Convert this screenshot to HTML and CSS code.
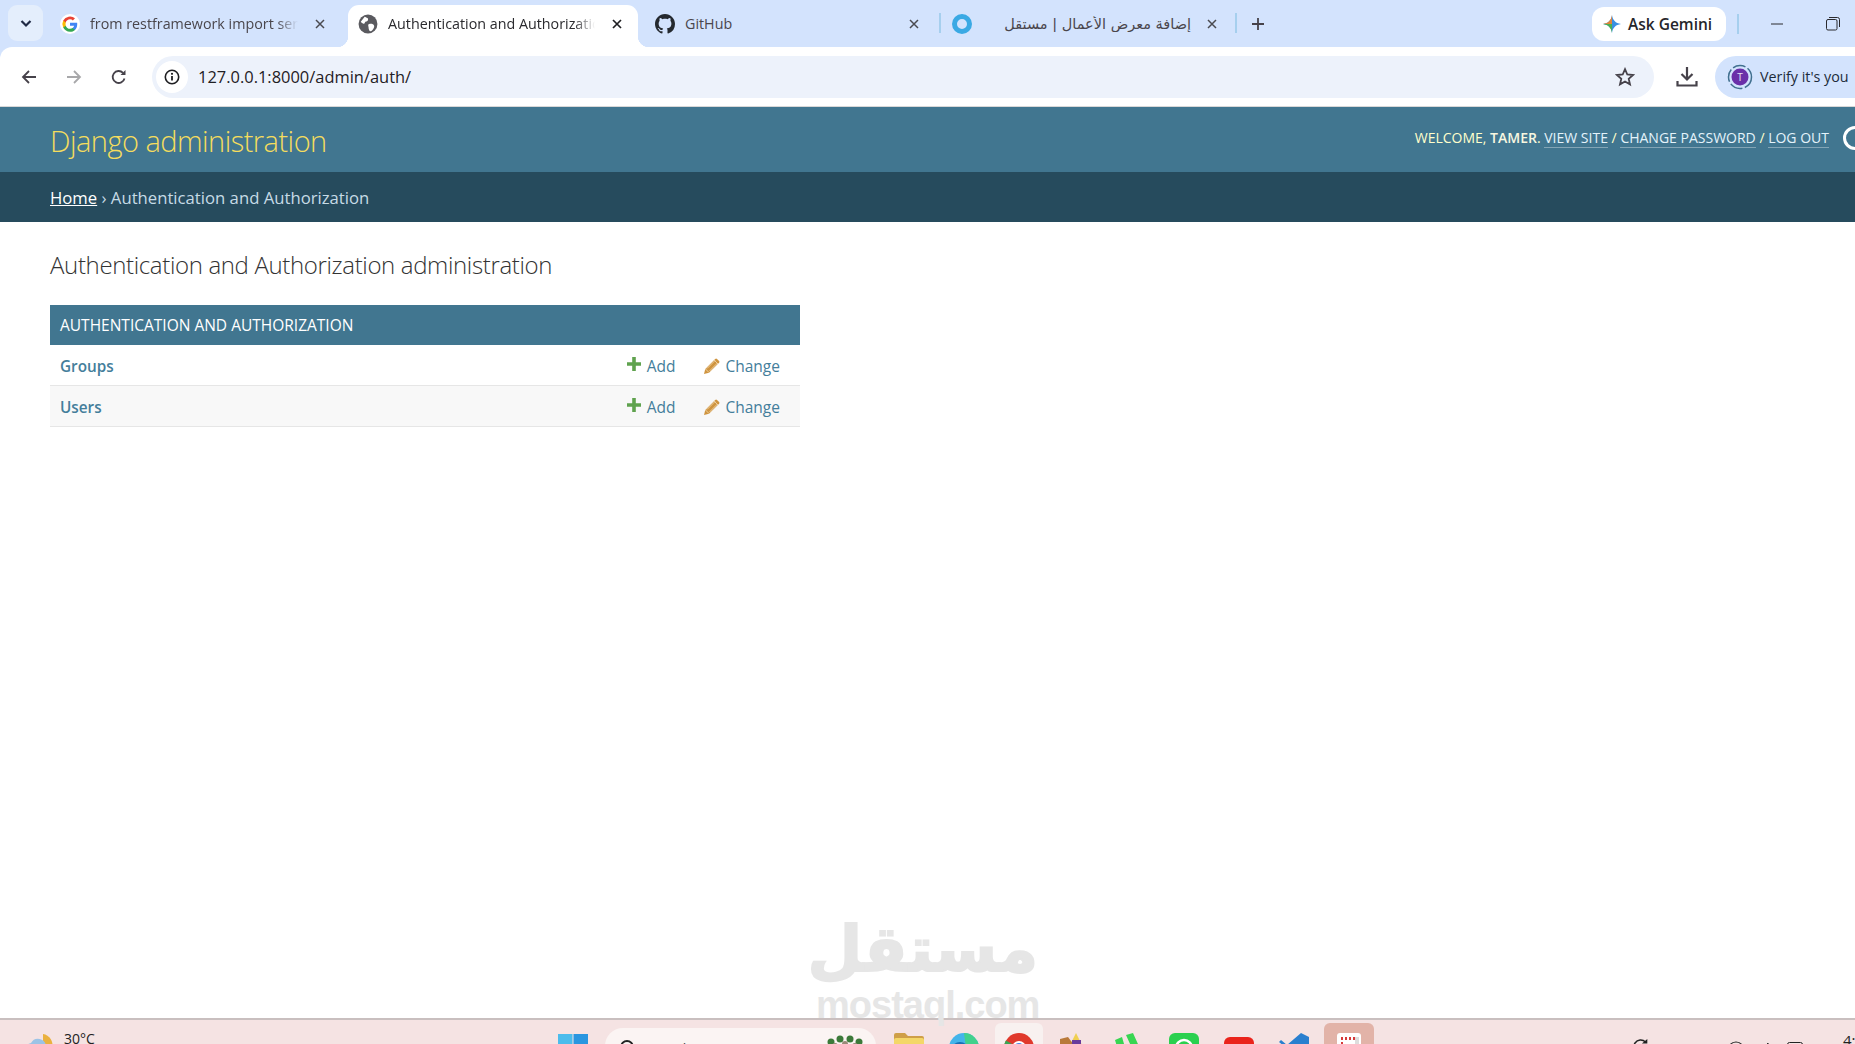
FILE: index.html
```html
<!DOCTYPE html>
<html lang="en">
<head>
<meta charset="utf-8">
<title>Authentication and Authorization</title>
<link rel="stylesheet" href="styles.css">
</head>
<body>
<div class="screen">
  <div class="tabstrip">
    <div class="tab-search"><svg width="14" height="14" viewBox="0 0 14 14"><path d="M2.500 5l4.500 4.500L11.500 5" fill="none" stroke="#1f2a44" stroke-width="2.200"/></svg></div>
    <div class="tab tab-1">
      <svg class="favicon" width="20" height="20" viewBox="0 0 18 18"><circle cx="9" cy="9" r="9" fill="#fff"/><path d="M15.500 9.200c0-.5 0-1-.1-1.400H9v2.700h3.700a3.200 3.200 0 0 1-1.400 2.100v1.700h2.200c1.300-1.200 2-3 2-5.100z" fill="#4285f4"/><path d="M9 16c1.800 0 3.400-.6 4.500-1.700l-2.200-1.700c-.6.4-1.400.7-2.300.7-1.800 0-3.300-1.200-3.800-2.800H2.900v1.700A7 7 0 0 0 9 16z" fill="#34a853"/><path d="M5.200 10.500a4.200 4.200 0 0 1 0-2.900V5.900H2.900a7 7 0 0 0 0 6.300z" fill="#fbbc05"/><path d="M9 4.800c1 0 1.900.3 2.600 1l1.900-1.900A7 7 0 0 0 2.900 5.900l2.300 1.700C5.700 6 7.200 4.800 9 4.800z" fill="#ea4335"/></svg>
      <span class="tab-title">from restframework import serializers</span>
      <svg class="tab-x" width="12" height="12" viewBox="0 0 12 12"><path d="M2 2l8 8M10 2l-8 8" stroke="#4a4a50" stroke-width="1.500"/></svg>
    </div>
    <div class="tab tab-active">
      <svg class="favicon" width="20" height="20" viewBox="0 0 18 18"><circle cx="9" cy="9" r="8.500" fill="#5a5a5f"/><path d="M6 2.500c2 1 3.500 1 3 3-.3 1.500-2.500 1-3 2.500s-2.500.5-3.500-1M10 9c2-.5 4 0 4.500 1.500S13 15 11.500 15.500 9.500 13 9.500 12 8.500 9.500 10 9z" fill="#fff"/></svg>
      <span class="tab-title">Authentication and Authorization</span>
      <svg class="tab-x" width="12" height="12" viewBox="0 0 12 12"><path d="M2 2l8 8M10 2l-8 8" stroke="#1f1f22" stroke-width="1.700"/></svg>
    </div>
    <div class="tab tab-3">
      <svg class="favicon" width="20" height="20" viewBox="0 0 16 16"><path fill="#24292f" d="M8 0C3.580 0 0 3.580 0 8c0 3.540 2.290 6.530 5.470 7.590.4.070.55-.17.55-.38 0-.19-.01-.82-.01-1.490-2.010.37-2.530-.49-2.690-.94-.09-.23-.48-.94-.82-1.130-.28-.15-.68-.52-.01-.53.630-.01 1.080.58 1.230.82.720 1.210 1.870.87 2.330.66.070-.52.280-.87.510-1.070-1.780-.2-3.640-.89-3.640-3.950 0-.87.310-1.590.820-2.150-.08-.2-.36-1.020.08-2.120 0 0 .67-.21 2.200.82.640-.18 1.320-.27 2-.27s1.360.09 2 .27c1.530-1.040 2.200-.82 2.200-.82.440 1.100.160 1.920.08 2.120.510.560.820 1.270.820 2.150 0 3.070-1.870 3.750-3.650 3.950.290.250.540.730.540 1.480 0 1.070-.01 1.930-.01 2.200 0 .210.150.460.550.380A8 8 0 0 0 16 8c0-4.420-3.580-8-8-8z"/></svg>
      <span class="tab-title">GitHub</span>
      <svg class="tab-x" width="12" height="12" viewBox="0 0 12 12"><path d="M2 2l8 8M10 2l-8 8" stroke="#4a4a50" stroke-width="1.500"/></svg>
    </div>
    <div class="tab-sep"></div>
    <div class="tab tab-4">
      <svg class="favicon" width="20" height="20" viewBox="0 0 20 20"><circle cx="10" cy="10" r="7.500" fill="none" stroke="#3aa9e4" stroke-width="5"/></svg>
      <span class="tab-title tab-title-ar" dir="rtl">إضافة معرض الأعمال | مستقل</span>
      <svg class="tab-x" width="12" height="12" viewBox="0 0 12 12"><path d="M2 2l8 8M10 2l-8 8" stroke="#4a4a50" stroke-width="1.500"/></svg>
    </div>
    <div class="tab-sep"></div>
    <svg class="tab-new" width="14" height="14" viewBox="0 0 14 14"><path d="M7 1v12M1 7h12" stroke="#46424a" stroke-width="1.800"/></svg>
    <div class="strip-right">
      <div class="gemini">
        <svg width="18" height="18" viewBox="0 0 18 18"><path d="M9 0c.6 5 3.500 8.300 9 9-5.500.7-8.400 4-9 9-.6-5-3.500-8.300-9-9 5.500-.7 8.400-4 9-9z" fill="#3a8fe0"/><path d="M9 0C8.400 5 5.500 8.300 0 9h9z" fill="#e2843a"/><path d="M0 9c5.500.7 8.400 4 9 9V9z" fill="#4caf50"/></svg>
        <span>Ask Gemini</span>
      </div>
      <div class="strip-sep"></div>
      <div class="win-btn"><svg width="14" height="14" viewBox="0 0 14 14"><path d="M1 7h12" stroke="#2a2a2e" stroke-width="1"/></svg></div>
      <div class="win-btn"><svg width="14" height="14" viewBox="0 0 14 14"><rect x=".5" y="2.500" width="10.500" height="10.500" rx="1.500" fill="none" stroke="#2a2a2e"/><path d="M3 .5h8.500a2 2 0 0 1 2 2V10" fill="none" stroke="#2a2a2e"/></svg></div>
    </div>
  </div>

  <div class="toolbar">
    <button class="nav-btn"><svg width="16" height="16" viewBox="0 0 16 16"><path d="M15 8H2M8 2L2 8l6 6" fill="none" stroke="#46424a" stroke-width="1.800"/></svg></button>
    <button class="nav-btn"><svg width="16" height="16" viewBox="0 0 16 16"><path d="M1 8h13M8 2l6 6-6 6" fill="none" stroke="#a8a8aa" stroke-width="1.800"/></svg></button>
    <button class="nav-btn"><svg width="16" height="16" viewBox="0 0 16 16"><path d="M13.500 9.500A6 6 0 1 1 12 3.800" fill="none" stroke="#46424a" stroke-width="1.800"/><path d="M9.500 6h5V1z" fill="#46424a"/></svg></button>
    <div class="urlbar">
      <div class="site-info"><svg width="16" height="16" viewBox="0 0 16 16"><circle cx="8" cy="8" r="6.700" fill="none" stroke="#1f1f22" stroke-width="1.600"/><path d="M8 7v4.500" stroke="#1f1f22" stroke-width="1.800"/><circle cx="8" cy="4.800" r="1.100" fill="#1f1f22"/></svg></div>
      <span class="url">127.0.0.1:8000/admin/auth/</span>
      <svg class="star" width="20" height="20" viewBox="0 0 20 20"><path d="M10 2.200l2.300 5.300 5.700.5-4.300 3.800 1.300 5.600L10 14.500l-5 2.900 1.300-5.600L2 8l5.700-.5z" fill="none" stroke="#46424a" stroke-width="1.800"/></svg>
    </div>
    <svg class="download" width="22" height="22" viewBox="0 0 22 22"><path d="M11 1v12M5.500 8l5.500 5.500L16.500 8" fill="none" stroke="#46424a" stroke-width="2.200"/><path d="M1.500 15v4.500h19V15" fill="none" stroke="#46424a" stroke-width="2.200"/></svg>
    <div class="verify">
      <svg width="26" height="26" viewBox="0 0 26 26"><circle cx="13" cy="13" r="11.500" fill="none" stroke="#41708f" stroke-width="1.500" stroke-dasharray="13 2.500"/><circle cx="13" cy="13" r="8.500" fill="#6a2fa8"/><text x="13" y="16.500" class="avatar-letter" text-anchor="middle">T</text></svg>
      <span>Verify it's you</span>
    </div>
  </div>

  <div class="page">
    <header class="dj-header">
      <div class="dj-brand">Django administration</div>
      <div class="dj-tools">
        <span>Welcome, <strong>Tamer</strong>. <a href="#">View site</a> / <a href="#">Change password</a> / <a href="#">Log out</a></span>
        <span class="theme-toggle"></span>
      </div>
    </header>
    <nav class="breadcrumbs"><a href="#">Home</a> › Authentication and Authorization</nav>
    <main class="content">
      <h1>Authentication and Authorization administration</h1>
      <section class="module">
        <h2>Authentication and Authorization</h2>
        <div class="row">
          <a href="#" class="row-name">Groups</a>
          <a href="#" class="act act-add"><svg width="14" height="14" viewBox="0 0 14 14"><path d="M7 0v14M0 7h14" stroke="#5fa24e" stroke-width="3.600"/></svg>Add</a>
          <a href="#" class="act act-change"><svg width="16" height="16" viewBox="0 0 16 16"><path d="M0 16l1.300-5L11.200.9a1.300 1.300 0 0 1 1.800 0l2.100 2.100a1.300 1.300 0 0 1 0 1.800L5 14.700z" fill="#cf943f"/><path d="M3 10.500L11 2.500M5.500 13L13.500 5M10 2l4 4M1.500 11l3.500 3.500" stroke="#f3dcb6" stroke-width=".8" fill="none"/></svg>Change</a>
        </div>
        <div class="row row-alt">
          <a href="#" class="row-name">Users</a>
          <a href="#" class="act act-add"><svg width="14" height="14" viewBox="0 0 14 14"><path d="M7 0v14M0 7h14" stroke="#5fa24e" stroke-width="3.600"/></svg>Add</a>
          <a href="#" class="act act-change"><svg width="16" height="16" viewBox="0 0 16 16"><path d="M0 16l1.300-5L11.200.9a1.300 1.300 0 0 1 1.800 0l2.100 2.100a1.300 1.300 0 0 1 0 1.800L5 14.700z" fill="#cf943f"/><path d="M3 10.500L11 2.500M5.500 13L13.500 5M10 2l4 4M1.500 11l3.500 3.500" stroke="#f3dcb6" stroke-width=".8" fill="none"/></svg>Change</a>
        </div>
      </section>
    </main>
  </div>

  <footer class="taskbar">
    <div class="weather">
      <svg width="30" height="26" viewBox="0 0 30 26"><path d="M17 2a11 11 0 0 1 9 14H17z" fill="#eab13f"/><path d="M3 24a7 7 0 0 1 2-13 8 8 0 0 1 15 3 5 5 0 0 1 0 10z" fill="#9cc3e6"/></svg>
      <span>30°C</span>
    </div>
    <div class="task-center">
      <svg class="win-logo" width="30" height="30" viewBox="0 0 30 30"><rect x="0" y="0" width="14.500" height="14.500" fill="#4cbcec"/><rect x="15.500" y="0" width="14.500" height="14.500" fill="#2a96e0"/><rect x="0" y="15.500" width="14.500" height="14.500" fill="#1a8ad6"/><rect x="15.500" y="15.500" width="14.500" height="14.500" fill="#1a8ad6"/></svg>
      <div class="search">
        <svg width="18" height="18" viewBox="0 0 18 18"><circle cx="8" cy="8" r="6" fill="none" stroke="#222" stroke-width="1.800"/><path d="M12.500 12.500L17 17" stroke="#222" stroke-width="1.800"/></svg>
        <span>Search</span>
        <svg class="search-art" width="36" height="20" viewBox="0 0 36 20"><g fill="#3c7a3a"><circle cx="4" cy="8" r="3.500"/><circle cx="13" cy="5" r="3.500"/><circle cx="23" cy="5" r="3.500"/><circle cx="32" cy="8" r="3.500"/></g><g fill="#9a8a78"><circle cx="8" cy="12" r="3"/><circle cx="18" cy="10" r="3"/><circle cx="28" cy="12" r="3"/></g></svg>
      </div>
      <div class="app"><svg width="30" height="30" viewBox="0 0 30 30"><path d="M0 2a2 2 0 0 1 2-2h9l3 3h14a2 2 0 0 1 2 2v3H0z" fill="#cf9f48"/><rect y="5" width="30" height="24" rx="2" fill="#f4d768"/></svg></div>
      <div class="app"><svg width="30" height="30" viewBox="0 0 30 30"><circle cx="15" cy="15" r="15" fill="#44b4ea"/><path d="M15 0a15 15 0 0 1 15 15H17z" fill="#42d18c"/><circle cx="11" cy="18" r="9" fill="#1a6fb5"/></svg></div>
      <div class="app app-running"><svg width="30" height="30" viewBox="0 0 30 30"><circle cx="15" cy="15" r="15" fill="#e0392c"/><path d="M15 15h15a15 15 0 0 1-15 15z" fill="#f2cd3c"/><path d="M15 15v15A15 15 0 0 1 2 7.500z" fill="#3aa553"/><circle cx="15" cy="15" r="7" fill="#fff"/><circle cx="15" cy="15" r="5" fill="#3f82e8"/></svg></div>
      <div class="app"><svg width="30" height="30" viewBox="0 0 30 30"><path d="M17 0l11 22H6z" fill="#f0cf50"/><path d="M1 6l8-2 6 8v16H1z" fill="#b9793a"/><rect x="13" y="7" width="9" height="6" fill="#6a3a9c"/></svg></div>
      <div class="app"><svg width="30" height="30" viewBox="0 0 30 30"><path d="M1 7l7-3 7 24-7 2zM12 2l7-2 9 20-7 2z" fill="#38d652"/></svg></div>
      <div class="app"><svg width="30" height="30" viewBox="0 0 30 30"><rect width="30" height="30" rx="6" fill="#2bd04f"/><circle cx="15" cy="15" r="8" fill="none" stroke="#fff" stroke-width="2.500"/></svg></div>
      <div class="app"><svg width="30" height="30" viewBox="0 0 30 30"><rect width="30" height="24" y="4" rx="6" fill="#ea231b"/></svg></div>
      <div class="app"><svg width="30" height="30" viewBox="0 0 30 30"><path d="M22 0l8 4v22l-8 4L8 16 2 21l-2-2 6-5-6-5 2-2 6 5z" fill="#2a7fcf"/></svg></div>
      <div class="app app-active"><svg width="24" height="26" viewBox="0 0 24 26"><rect width="24" height="26" rx="3" fill="#fff"/><path d="M4 4h2v3H4zM8 4h2v3H8zM12 4h2v3h-2zM16 4h2v3h-2zM4 9h2v3H4zM4 14h2v3H4z" fill="#d63a3a"/><rect x="18" y="4" width="4" height="22" fill="#ddd"/></svg></div>
    </div>
    <div class="tray">
      <svg class="tray-sync" width="18" height="18" viewBox="0 0 20 20"><path d="M17 11a7.500 7.500 0 1 1-2-6.500" fill="none" stroke="#222" stroke-width="1.600"/><path d="M11 6h6V1z" fill="#222"/></svg>
      <svg class="tray-globe" width="18" height="18" viewBox="0 0 18 18"><circle cx="9" cy="9" r="8" fill="none" stroke="#222" stroke-width="1.200"/></svg>
      <svg class="tray-vol" width="14" height="16" viewBox="0 0 14 16"><path d="M0 6h3l3-4v12l-3-4H0z" fill="none" stroke="#222"/><path d="M9 4a6 6 0 0 1 0 8" fill="none" stroke="#222"/></svg>
      <svg class="tray-box" width="16" height="16" viewBox="0 0 16 16"><rect x=".5" y=".5" width="15" height="12" rx="2" fill="none" stroke="#222"/></svg>
      <span class="clock">4:</span>
    </div>
  </footer>

  <div class="watermark">
    <div class="wm-ar" dir="rtl">مستقل</div>
    <div class="wm-en">mostaql.com</div>
  </div>
</div>
</body>
</html>
```
FILE: styles.css
```css
* { box-sizing: border-box; }
html, body { margin: 0; padding: 0; height: 100%; overflow: hidden; background: #fff; }
body { font-family: "Open Sans", "Noto Sans", "DejaVu Sans", sans-serif; }
.screen { width: 1855px; height: 1044px; display: flex; flex-direction: column; overflow: hidden; position: relative; background: #d3e3fd; }
svg { flex: none; display: block; }

/* Tab strip */
.tabstrip { height: 47px; background: #d3e3fd; display: flex; align-items: flex-end; flex: none; padding-left: 8px; }
.tab-search { width: 35px; height: 36px; background: #e4eefc; border-radius: 9px; display: flex; align-items: center; justify-content: center; margin-bottom: 6px; flex: none; }
.tab { display: flex; align-items: center; height: 42px; padding-bottom: 5px; font-size: 14.300px; color: #4a464c; flex: none; }
.tab-1 { width: 305px; padding-left: 17px; }
.tab-active { width: 290px; background: #fff; border-radius: 11px 11px 0 0; padding-left: 10px; color: #2a2a2e; position: relative; }
.tab-active::before, .tab-active::after { content: ""; position: absolute; bottom: 0; width: 11px; height: 11px; }
.tab-active::before { left: -11px; background: radial-gradient(circle at 0 0, transparent 11px, #fff 11.500px); }
.tab-active::after { right: -11px; background: radial-gradient(circle at 100% 0, transparent 11px, #fff 11.500px); }
.tab-3 { width: 301px; padding-left: 17px; }
.tab-4 { width: 294px; padding-left: 11px; }
.favicon { margin-right: 10px; }
.tab-title { flex: 1; min-width: 0; white-space: nowrap; overflow: hidden; -webkit-mask-image: linear-gradient(90deg, #000 90%, transparent); mask-image: linear-gradient(90deg, #000 90%, transparent); }
.tab-3 .tab-title { -webkit-mask-image: none; mask-image: none; }
.tab-title-ar { -webkit-mask-image: none; mask-image: none; font-family: "DejaVu Sans", sans-serif; font-size: 14.500px; }
.tab-x { margin-right: 16px; margin-left: 16px; }
.tab-1 .tab-x { margin-right: 22px; }
.tab-active .tab-x { margin-right: 15px; }
.tab-3 .tab-x { margin-right: 19px; }
.tab-4 .tab-x { margin-left: 15px; margin-right: 17px; }
.tab-sep { width: 2px; height: 20px; background: #a6cfee; margin-bottom: 14px; flex: none; }
.tab-new { margin: 0 0 16px 14px; }
.strip-right { margin-left: auto; display: flex; align-items: center; height: 47px; }
.gemini { width: 134px; height: 34px; background: #fff; border-radius: 12px; display: flex; align-items: center; gap: 7px; padding-left: 11px; font-size: 15.500px; font-weight: 600; color: #26262a; margin-right: 11px; }
.strip-sep { width: 2px; height: 20px; background: #a6cfee; }
.win-btn { width: 40px; height: 47px; display: flex; align-items: center; justify-content: center; margin-left: 18px; }
.win-btn + .win-btn { margin-left: 16px; margin-right: 2px; }

/* Toolbar */
.toolbar { height: 60px; background: #fff; display: flex; align-items: center; flex: none; border-bottom: 1px solid #d8d8d8; padding-left: 6px; border-top-left-radius: 12px; }
.nav-btn { width: 45px; height: 36px; background: none; border: 0; padding: 0; display: flex; align-items: center; justify-content: center; }
.urlbar { width: 1502px; height: 42px; margin-left: 11px; background: #edf2fb; border-radius: 21px; display: flex; align-items: center; padding: 0 19px 0 4px; font-size: 16.450px; color: #1f2024; }
.site-info { width: 32px; height: 32px; border-radius: 50%; background: #fff; display: flex; align-items: center; justify-content: center; margin-right: 10px; }
.url { flex: 1; }
.download { margin-left: 22px; }
.verify { margin-left: 17px; height: 42px; flex: 1; border-radius: 21px 0 0 21px; background: #d3e3fd; display: flex; align-items: center; gap: 7px; padding-left: 12px; font-size: 14.300px; color: #1c2b3a; white-space: nowrap; overflow: hidden; }
.avatar-letter { font-size: 10px; fill: #e8e0f4; font-family: "Open Sans", sans-serif; }

/* Django page */
.page { flex: 1; min-height: 0; display: flex; flex-direction: column; overflow: hidden; background: #fff; }
.dj-header { height: 65px; background: #417690; flex: none; display: flex; justify-content: space-between; align-items: center; padding-left: 50px; overflow: hidden; }
.dj-brand { font-size: 29px; font-weight: 300; letter-spacing: -.53px; color: #f5dd5d; line-height: 1; margin-top: 1px; }
.dj-tools { display: flex; align-items: center; text-transform: uppercase; font-size: 14px; color: #ffc; margin-top: -4px; white-space: nowrap; }
.dj-tools strong { font-weight: 600; color: #f7f7e0; }
.dj-tools a { color: #e4f3fb; text-decoration: none; border-bottom: 1px solid rgba(255,255,255,.35); }
.theme-toggle { width: 24px; height: 24px; border-radius: 50%; border: 3px solid #fff; margin-left: 14px; margin-right: -12px; }
.breadcrumbs { height: 50px; background: #264b5d; flex: none; line-height: 52px; padding-left: 50px; color: #c6dbe6; font-size: 16.700px; white-space: pre; }
.breadcrumbs a { color: #fff; text-decoration: underline; }
.content { padding: 25px 50px 0; }
h1 { margin: 0 0 22px; font-size: 24px; font-weight: 300; letter-spacing: -.35px; line-height: 36px; color: #333; }
.module { width: 750px; }
h2 { margin: 0; height: 40px; background: #417690; color: #fff; font-size: 15.500px; font-weight: 400; text-transform: uppercase; display: flex; align-items: center; padding-left: 10px; }
.row { height: 41px; display: flex; align-items: center; border-bottom: 1px solid #e6e6e6; padding: 2px 20px 0 10px; font-size: 15.300px; }
.row-alt { background: #f8f8f8; }
a { color: #447e9b; text-decoration: none; }
.row-name { font-weight: 600; flex: 1; }
.act { display: flex; align-items: center; color: #447e9b; font-size: 15.500px; }
.act-add { gap: 6px; margin-right: 29px; }
.act-add svg { margin-top: -4px; }
.act-change { gap: 5px; }

/* Watermark */
.watermark { position: absolute; left: 816px; top: 914px; width: 222px; text-align: center; color: #e6e6e6; pointer-events: none; }
.wm-ar { font-family: "DejaVu Sans", sans-serif; font-weight: 700; font-size: 63px; line-height: 72px; -webkit-text-stroke: 2px #e6e6e6; white-space: nowrap; text-align: center; padding-left: 10px; }
.wm-en { font-family: "Liberation Sans", sans-serif; font-weight: 700; font-size: 38px; line-height: 38px; letter-spacing: -1px; white-space: nowrap; }

/* Taskbar */
.taskbar { height: 26px; flex: none; background: #f5e3e3; border-top: 2px solid #c9bfbf; display: flex; align-items: flex-start; position: relative; overflow: hidden; font-family: "Open Sans", sans-serif; }
.weather { display: flex; gap: 8px; padding: 12px 0 0 26px; font-size: 14px; color: #222; width: 558px; flex: none; }
.weather span { margin-top: -3px; }
.task-center { display: flex; align-items: flex-start; flex: none; }
.win-logo { margin-top: 14px; }
.search { width: 271px; height: 36px; margin: 8px 0 0 17px; background: #fbf4f3; border-radius: 18px; display: flex; gap: 10px; padding: 11px 13px 0 14px; font-size: 14px; color: #444; }
.search span { flex: 1; }
.search-art { margin-top: -5px; }
.app { width: 55px; height: 40px; display: flex; justify-content: center; padding-top: 13px; flex: none; }
.search + .app { margin-left: 5px; }
.app-running { width: 48px; margin: 3px 3.500px 0; padding-top: 10px; background: #f8f1f0; border-radius: 6px 6px 0 0; }
.app-active { width: 50px; margin: 3px 2.500px 0; padding-top: 10px; background: #e2b3a8; border-radius: 6px 6px 0 0; }
.tray { position: absolute; left: 1632px; top: 0; right: 0; display: flex; align-items: flex-start; }
.tray-sync { margin-top: 18px; margin-right: 77px; }
.tray-globe { margin-top: 21px; margin-right: 17px; }
.tray-vol { margin-top: 21px; margin-right: 11px; }
.tray-box { margin-top: 22px; margin-right: 40px; }
.clock { font-size: 15px; line-height: 20px; color: #222; margin-top: 10px; }
```
